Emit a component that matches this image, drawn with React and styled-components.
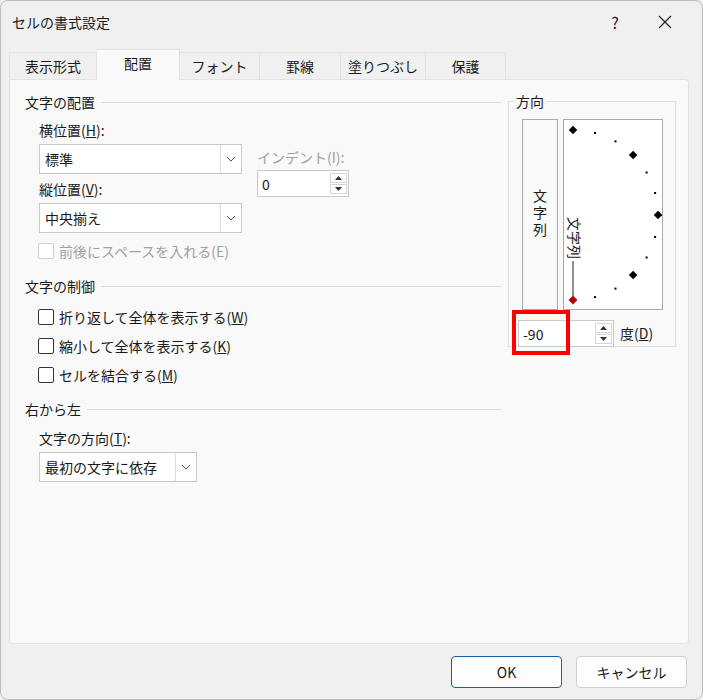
import React from 'react';
import styled, { createGlobalStyle } from 'styled-components';

const Global = createGlobalStyle`
  body { margin: 0; background: #f0f0f0; }
  * { box-sizing: border-box; }
`;

const Dialog = styled.div`
  width: 703px;
  height: 700px;
  background: #f0f0f0;
  border: 1px solid #bdbdbd;
  border-radius: 8px;
  font-family: "Noto Sans CJK JP", "Noto Sans", sans-serif;
  font-size: 14px;
  color: #1a1a1a;
  display: flex;
  flex-direction: column;
  overflow: hidden;
`;

const TitleBar = styled.div`
  height: 42px;
  display: flex;
  align-items: center;
  padding-left: 11px;
  font-size: 14px;
`;

const TitleText = styled.div`
  flex: 1;
`;

const TitleButton = styled.div`
  width: 50px;
  text-align: center;
  font-size: 16px;
  margin-right: ${({ $mr }) => $mr || 0}px;
`;

const Tabs = styled.div`
  display: flex;
  align-items: flex-end;
  height: 36px;
  padding-left: 8px;
`;

const Tab = styled.div`
  width: ${({ $w }) => $w}px;
  height: ${({ $active }) => ($active ? 31 : 27)}px;
  border: 1px solid #e2e2e2;
  border-bottom: none;
  border-left: ${({ $first }) => ($first ? '1px solid #e2e2e2' : 'none')};
  background: ${({ $active }) => ($active ? '#f9f9f9' : '#f0f0f0')};
  display: flex;
  align-items: center;
  justify-content: center;
  padding-bottom: ${({ $active }) => ($active ? 4 : 0)}px;
  margin-bottom: ${({ $active }) => ($active ? -1 : 0)}px;
  position: relative;
`;

const Panel = styled.div`
  margin: 0 13px 0 8px;
  height: 565px;
  background: #f9f9f9;
  border: 1px solid #e2e2e2;
  border-radius: 0 4px 4px 4px;
  display: flex;
  padding: 11px 12px 0 15px;
`;

const Left = styled.div`
  width: 480px;
  display: flex;
  flex-direction: column;
`;

const SectionHead = styled.div`
  display: flex;
  align-items: center;
  gap: 6px;
  height: 22px;
  margin-top: ${({ $mt }) => $mt || 0}px;
  &::after {
    content: '';
    flex: 1;
    border-top: 1px solid #dedede;
  }
`;

const Indent = styled.div`
  padding-left: 14px;
  display: flex;
  flex-direction: column;
`;

const Label = styled.div`
  height: 22px;
  line-height: 22px;
  margin-top: ${({ $mt }) => $mt || 0}px;
  color: ${({ $disabled }) => ($disabled ? '#a0a0a0' : 'inherit')};
`;

const Row = styled.div`
  display: flex;
  gap: 15px;
`;

const Combo = styled.div`
  width: ${({ $w }) => $w}px;
  height: 30px;
  background: #fff;
  border: 1px solid #c8c8c8;
  display: flex;
  align-items: center;
  padding-left: 5px;
  margin-top: 3px;
`;

const ComboText = styled.div`
  flex: 1;
`;

const ComboArrow = styled.div`
  width: 21px;
  height: 100%;
  border-left: 1px solid #dcdcdc;
  display: flex;
  align-items: center;
  justify-content: center;
`;

const Spin = styled.div`
  width: ${({ $w }) => $w}px;
  height: 27px;
  background: #fff;
  border: 1px solid #c8c8c8;
  display: flex;
  align-items: center;
  padding-left: 4px;
  margin-top: 2px;
`;

const SpinButtons = styled.div`
  width: 18px;
  height: 100%;
  display: flex;
  flex-direction: column;
  justify-content: center;
  gap: 1px;
  padding: 2px 1px 2px 0;
  & > div {
    flex: 1;
    border: 1px solid #d6d6d6;
    display: flex;
    align-items: center;
    justify-content: center;
  }
`;

const Check = styled.label`
  display: flex;
  align-items: center;
  gap: 5px;
  height: 29px;
  margin-left: -1px;
  color: ${({ $disabled }) => ($disabled ? '#a0a0a0' : 'inherit')};
  &::before {
    content: '';
    width: 14px;
    height: 14px;
    border: 1px solid ${({ $disabled }) => ($disabled ? '#cfcfcf' : '#333')};
    border-radius: 2px;
    background: #fff;
  }
`;

const Right = styled.div`
  flex: 1;
  display: flex;
  flex-direction: column;
  padding-left: 6px;
`;

const OrientGroup = styled.fieldset`
  margin: 0;
  width: 168px;
  height: 256px;
  border: 1px solid #dedede;
  padding: 8px 4px 0 13px;
  position: relative;
  & > legend {
    padding: 0 2px;
    margin-left: -8px;
  }
`;

const Orient = styled.div`
  display: flex;
  gap: 5px;
  height: 191px;
`;

const VerticalBtn = styled.div`
  width: 36px;
  border: 1px solid #a8a8a8;
  display: flex;
  align-items: center;
  justify-content: center;
  writing-mode: vertical-rl;
  letter-spacing: 3px;
`;

const Dial = styled.div`
  width: 100px;
  border: 1px solid #a8a8a8;
  background: #fff;
`;

const DegRow = styled.div`
  display: flex;
  align-items: center;
  gap: 6px;
  margin-top: 8px;
  margin-left: -4px;
  position: relative;
`;

const RedBox = styled.div`
  position: absolute;
  left: -6px;
  top: -8px;
  width: 58px;
  height: 45px;
  border: 4px solid #f00;
`;

const Footer = styled.div`
  flex: 1;
  display: flex;
  justify-content: flex-end;
  align-items: center;
  gap: 14px;
  padding-right: 15px;
`;

const Button = styled.div`
  width: 111px;
  height: 32px;
  background: #fdfdfd;
  border: 1px solid ${({ $primary }) => ($primary ? '#1b5fa8' : '#d0d0d0')};
  border-radius: 4px;
  display: flex;
  align-items: center;
  justify-content: center;
  font-size: 14px;
`;

const Chevron = () => (
  <svg width="10" height="6" viewBox="0 0 10 6"><path d="M1 1l4 4 4-4" fill="none" stroke="#555" strokeWidth="1" /></svg>
);

const Tri = ({ up }) => (
  <svg width="7" height="4" viewBox="0 0 7 4"><path d={up ? 'M0 4L3.5 0L7 4Z' : 'M0 0L3.5 4L7 0Z'} fill="#333" /></svg>
);

const U = ({ children }) => <span style={{ textDecoration: 'underline' }}>{children}</span>;

const DialSvg = () => {
  const cx = 9, cy = 95, r = 85;
  const pts = [];
  for (let a = -90; a <= 90; a += 15) {
    const rad = (a * Math.PI) / 180;
    pts.push({ a, x: cx + r * Math.cos(rad), y: cy - r * Math.sin(rad) });
  }
  return (
    <svg width="98" height="189" viewBox="0 0 98 189">
      {pts.map((p) =>
        p.a === -90 ? (
          <rect key={p.a} x={p.x - 3} y={p.y - 3} width="6" height="6" fill="#c00000" stroke="#333" strokeWidth="0.5" transform={`rotate(45 ${p.x} ${p.y})`} />
        ) : p.a % 45 === 0 ? (
          <rect key={p.a} x={p.x - 3} y={p.y - 3} width="6" height="6" fill="#000" transform={`rotate(45 ${p.x} ${p.y})`} />
        ) : (
          <rect key={p.a} x={p.x - 1} y={p.y - 1} width="2" height="2" fill="#000" />
        )
      )}
      <text x={cx} y={cy + 2} fontSize="14" fill="#222" transform={`rotate(90 ${cx} ${cy + 2})`} dominantBaseline="middle" fontFamily="Noto Sans CJK JP">文字列</text>
      <line x1={cx} y1={cy + 46} x2={cx} y2={cy + r - 4} stroke="#222" strokeWidth="1" />
    </svg>
  );
};

export default function App() {
  return (
    <>
      <Global />
      <Dialog>
        <TitleBar>
          <TitleText>セルの書式設定</TitleText>
          <TitleButton>?</TitleButton>
          <TitleButton $mr={12}>
            <svg width="14" height="14" viewBox="0 0 14 14"><path d="M1 1l12 12M13 1L1 13" stroke="#222" strokeWidth="1.2" /></svg>
          </TitleButton>
        </TitleBar>
        <Tabs>
          <Tab $w={88} $first>表示形式</Tab>
          <Tab $w={83} $active>配置</Tab>
          <Tab $w={80}>フォント</Tab>
          <Tab $w={81}>罫線</Tab>
          <Tab $w={85}>塗りつぶし</Tab>
          <Tab $w={80}>保護</Tab>
        </Tabs>
        <Panel>
          <Left>
            <SectionHead>文字の配置</SectionHead>
            <Indent>
              <Label $mt={6}>横位置(<U>H</U>):</Label>
              <Row>
                <div>
                  <Combo $w={203}><ComboText>標準</ComboText><ComboArrow><Chevron /></ComboArrow></Combo>
                  <Label $mt={4}>縦位置(<U>V</U>):</Label>
                  <Combo $w={203}><ComboText>中央揃え</ComboText><ComboArrow><Chevron /></ComboArrow></Combo>
                </div>
                <div style={{ paddingTop: 5 }}>
                  <Label $disabled>インデント(I):</Label>
                  <Spin $w={92}><ComboText>0</ComboText><SpinButtons><div><Tri up /></div><div><Tri /></div></SpinButtons></Spin>
                </div>
              </Row>
              <Check $disabled style={{ marginTop: 3 }}><span>前後にスペースを入れる(E)</span></Check>
            </Indent>
            <SectionHead $mt={10}>文字の制御</SectionHead>
            <Indent>
              <div style={{ height: 5 }} />
              <Check><span>折り返して全体を表示する(<U>W</U>)</span></Check>
              <Check><span>縮小して全体を表示する(<U>K</U>)</span></Check>
              <Check><span>セルを結合する(<U>M</U>)</span></Check>
            </Indent>
            <SectionHead $mt={9}>右から左</SectionHead>
            <Indent>
              <Label $mt={7}>文字の方向(<U>T</U>):</Label>
              <Combo $w={158}><ComboText>最初の文字に依存</ComboText><ComboArrow><Chevron /></ComboArrow></Combo>
            </Indent>
          </Left>
          <Right>
            <OrientGroup>
              <legend>方向</legend>
              <Orient>
                <VerticalBtn>文字列</VerticalBtn>
                <Dial><DialSvg /></Dial>
              </Orient>
              <DegRow>
                <RedBox />
                <Spin $w={96}><ComboText>-90</ComboText><SpinButtons><div><Tri up /></div><div><Tri /></div></SpinButtons></Spin>
                <span>度(<U>D</U>)</span>
              </DegRow>
            </OrientGroup>
          </Right>
        </Panel>
        <Footer>
          <Button $primary>OK</Button>
          <Button>キャンセル</Button>
        </Footer>
      </Dialog>
    </>
  );
}
